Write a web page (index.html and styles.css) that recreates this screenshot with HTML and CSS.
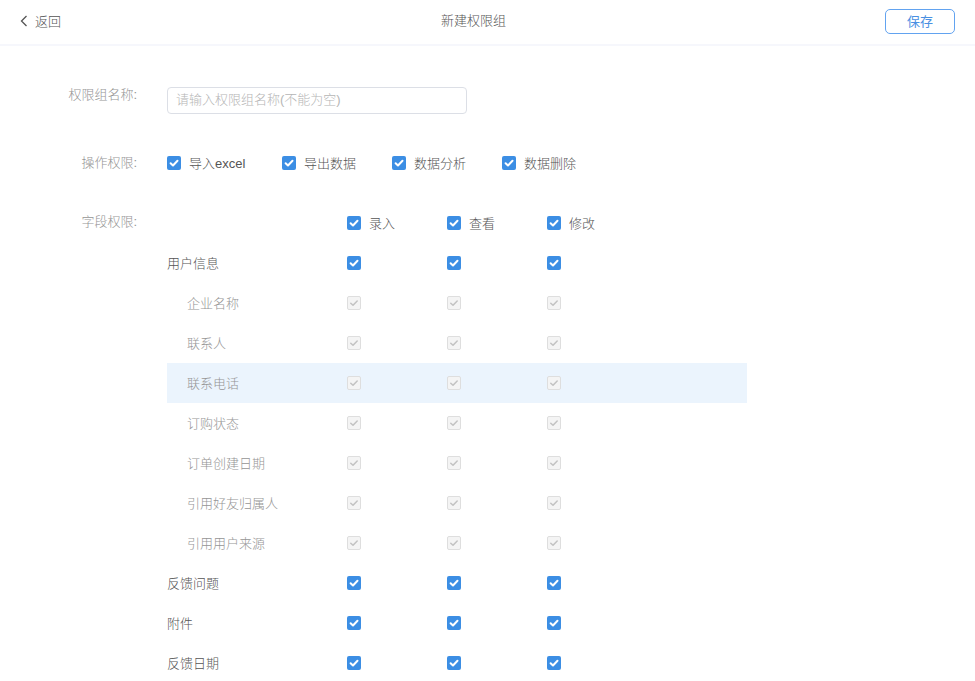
FILE: index.html
```html
<!DOCTYPE html>
<html lang="zh-CN">
<head>
<meta charset="utf-8">
<title>新建权限组</title>
<link rel="stylesheet" href="styles.css">
</head>
<body>
<header class="topbar">
  <a class="back">
    <svg class="chev" width="8" height="12" viewBox="0 0 8 12"><path d="M6.5 1 L1.5 6 L6.5 11" fill="none" stroke="#555" stroke-width="1.3"/></svg>
    <span class="t">返回</span>
  </a>
  <div class="title">新建权限组</div>
  <button class="save"><span class="t">保存</span></button>
</header>

<main class="main">
  <div class="row row-name">
    <div class="label label-top">权限组名称:</div>
    <div class="input">请输入权限组名称(不能为空)</div>
  </div>

  <div class="row row-ops">
    <div class="label">操作权限:</div>
    <div class="ops">
      <label class="opt w115"><span class="cb"></span><span class="t">导入excel</span></label>
      <label class="opt w110"><span class="cb"></span><span class="t">导出数据</span></label>
      <label class="opt w110"><span class="cb"></span><span class="t">数据分析</span></label>
      <label class="opt"><span class="cb"></span><span class="t">数据删除</span></label>
    </div>
  </div>

  <div class="row row-fields">
    <div class="label label-head">字段权限:</div>
    <div class="table">
      <div class="tr head">
        <div class="name"></div>
        <div class="cell"><span class="cb"></span><span class="t">录入</span></div>
        <div class="cell"><span class="cb"></span><span class="t">查看</span></div>
        <div class="cell"><span class="cb"></span><span class="t">修改</span></div>
      </div>
      <div class="tr">
        <div class="name top"><span class="t">用户信息</span></div>
        <div class="cell"><span class="cb"></span></div>
        <div class="cell"><span class="cb"></span></div>
        <div class="cell"><span class="cb"></span></div>
      </div>
      <div class="tr">
        <div class="name sub"><span class="t">企业名称</span></div>
        <div class="cell"><span class="cb dis"></span></div>
        <div class="cell"><span class="cb dis"></span></div>
        <div class="cell"><span class="cb dis"></span></div>
      </div>
      <div class="tr">
        <div class="name sub"><span class="t">联系人</span></div>
        <div class="cell"><span class="cb dis"></span></div>
        <div class="cell"><span class="cb dis"></span></div>
        <div class="cell"><span class="cb dis"></span></div>
      </div>
      <div class="tr hover">
        <div class="name sub"><span class="t">联系电话</span></div>
        <div class="cell"><span class="cb dis"></span></div>
        <div class="cell"><span class="cb dis"></span></div>
        <div class="cell"><span class="cb dis"></span></div>
      </div>
      <div class="tr">
        <div class="name sub"><span class="t">订购状态</span></div>
        <div class="cell"><span class="cb dis"></span></div>
        <div class="cell"><span class="cb dis"></span></div>
        <div class="cell"><span class="cb dis"></span></div>
      </div>
      <div class="tr">
        <div class="name sub"><span class="t">订单创建日期</span></div>
        <div class="cell"><span class="cb dis"></span></div>
        <div class="cell"><span class="cb dis"></span></div>
        <div class="cell"><span class="cb dis"></span></div>
      </div>
      <div class="tr">
        <div class="name sub"><span class="t">引用好友归属人</span></div>
        <div class="cell"><span class="cb dis"></span></div>
        <div class="cell"><span class="cb dis"></span></div>
        <div class="cell"><span class="cb dis"></span></div>
      </div>
      <div class="tr">
        <div class="name sub"><span class="t">引用用户来源</span></div>
        <div class="cell"><span class="cb dis"></span></div>
        <div class="cell"><span class="cb dis"></span></div>
        <div class="cell"><span class="cb dis"></span></div>
      </div>
      <div class="tr">
        <div class="name top"><span class="t">反馈问题</span></div>
        <div class="cell"><span class="cb"></span></div>
        <div class="cell"><span class="cb"></span></div>
        <div class="cell"><span class="cb"></span></div>
      </div>
      <div class="tr">
        <div class="name top"><span class="t">附件</span></div>
        <div class="cell"><span class="cb"></span></div>
        <div class="cell"><span class="cb"></span></div>
        <div class="cell"><span class="cb"></span></div>
      </div>
      <div class="tr">
        <div class="name top"><span class="t">反馈日期</span></div>
        <div class="cell"><span class="cb"></span></div>
        <div class="cell"><span class="cb"></span></div>
        <div class="cell"><span class="cb"></span></div>
      </div>
    </div>
  </div>
</main>
</body>
</html>
```

FILE: styles.css
```css
* { box-sizing: border-box; }
html, body { margin: 0; padding: 0; background: #fff; }
body {
  font-family: "Liberation Sans", "Noto Sans CJK SC", sans-serif;
  font-size: 13px;
  font-weight: 300;
  color: #555;
  overflow: hidden;
  height: 681px;
}

.t { display: inline-block; margin-bottom: 2px; }

.topbar {
  height: 46px;
  border-bottom: 2px solid #f6f7fc;
  display: flex;
  align-items: center;
  position: relative;
  padding: 0 20px 2px 20px;
}
.back {
  display: flex;
  align-items: center;
  gap: 7px;
  color: #555;
  font-size: 13px;
}
.chev { display: block; }
.title {
  position: absolute;
  left: 0; right: 28px;
  top: 0;
  height: 44px;
  line-height: 41px;
  text-align: center;
  color: #555;
  font-size: 13px;
  pointer-events: none;
}
.save {
  margin-left: auto;
  width: 70px;
  height: 25px;
  border: 1px solid #62a3f0;
  border-radius: 5px;
  background: #fff;
  color: #4a90e2;
  font-family: inherit;
  font-weight: 400;
  font-size: 13px;
  padding: 0;
  display: flex;
  align-items: center;
  justify-content: center;
}

.main { padding-top: 41px; }
.row { display: flex; }
.label {
  width: 137px;
  text-align: right;
  color: #959595;
  margin-right: 30px;
  flex: none;
}
.row-name { height: 26px; }
.label-top { line-height: 16px; }
.input {
  width: 300px;
  height: 27px;
  border: 1px solid #dcdfe6;
  border-radius: 4px;
  color: #b5b5b5;
  padding-left: 8px;
  line-height: 24px;
}

.row-ops { margin-top: 30px; height: 40px; align-items: center; }
.row-ops .label { line-height: 38px; }
.ops { display: flex; align-items: center; }
.opt { display: flex; align-items: center; gap: 8px; color: #555; }
.w115 { width: 115px; }
.w110 { width: 110px; }

.cb {
  width: 14px; height: 14px;
  border-radius: 2px;
  background: #3c8ee4 url("data:image/svg+xml;utf8,<svg xmlns='http://www.w3.org/2000/svg' width='14' height='14' viewBox='0 0 14 14'><path d='M3.6 7.2 L6 9.5 L10.5 4.8' fill='none' stroke='white' stroke-width='2' stroke-linecap='round' stroke-linejoin='round'/></svg>") no-repeat center;
  flex: none;
  display: inline-block;
}
.cb.dis {
  background: #f4f4f4 url("data:image/svg+xml;utf8,<svg xmlns='http://www.w3.org/2000/svg' width='14' height='14' viewBox='0 0 14 14'><path d='M3.8 7.2 L6 9.3 L10.2 5' fill='none' stroke='%23c2c2c2' stroke-width='1.5' stroke-linecap='round' stroke-linejoin='round'/></svg>") no-repeat center;
  border: 1px solid #dedede;
}

.row-fields { margin-top: 20px; align-items: flex-start; }
.label-head { line-height: 38px; }
.table { width: 580px; }
.tr { display: flex; height: 40px; align-items: center; }
.tr.hover { background: #ebf4fd; }
.name { width: 180px; flex: none; display: flex; align-items: center; }
.name.top { color: #555; }
.name.sub { color: #959595; padding-left: 20px; }
.cell { width: 100px; display: flex; align-items: center; gap: 8px; }
```
